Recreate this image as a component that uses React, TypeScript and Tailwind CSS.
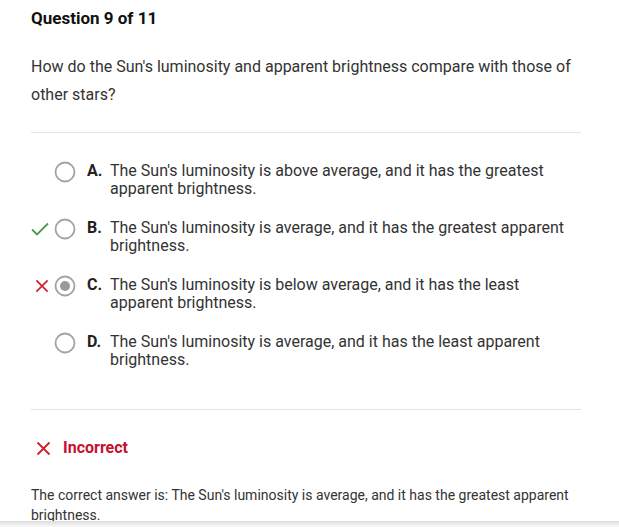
import React from "react";

const Radio = ({ selected }: { selected?: boolean }) => (
  <svg width="22" height="22" viewBox="0 0 22 22" className="shrink-0">
    <circle cx="11" cy="11" r="9.5" fill="white" stroke="#a3a3a3" strokeWidth="1.8" />
    {selected && <circle cx="11" cy="11" r="5" fill="#9a9a9a" />}
  </svg>
);

const Check = () => (
  <svg width="20" height="16" viewBox="0 0 20 16">
    <path d="M2 8.5 L7 13.5 L18 2.5" fill="none" stroke="#4a9b4a" strokeWidth="1.8" />
  </svg>
);

const Cross = ({ size = 15 }: { size?: number }) => (
  <svg width={size} height={size} viewBox="0 0 15 15">
    <path d="M1.5 1.5 L13.5 13.5 M13.5 1.5 L1.5 13.5" fill="none" stroke="#d0202a" strokeWidth="1.8" />
  </svg>
);

const options = [
  { letter: "A.", l1: "The Sun's luminosity is above average, and it has the greatest", l2: "apparent brightness.", mark: null as null | "check" | "cross", selected: false },
  { letter: "B.", l1: "The Sun's luminosity is average, and it has the greatest apparent", l2: "brightness.", mark: "check" as const, selected: false },
  { letter: "C.", l1: "The Sun's luminosity is below average, and it has the least", l2: "apparent brightness.", mark: "cross" as const, selected: true },
  { letter: "D.", l1: "The Sun's luminosity is average, and it has the least apparent", l2: "brightness.", mark: null, selected: false },
];

export default function App() {
  return (
    <div
      className="relative h-[527px] w-[619px] overflow-hidden bg-white text-[#333]"
      style={{ fontFamily: "Roboto, 'Liberation Sans', sans-serif" }}
    >
      <div className="pl-[31px] pr-[38px] pt-[7px]">
        <h1 className="text-[17px] font-bold leading-[22px] text-[#111]">Question 9 of 11</h1>
        <p className="mt-[24px] text-[16px] leading-[28px] text-[#333]">
          How do the Sun's luminosity and apparent brightness compare with those of other stars?
        </p>
        <div className="mt-[23px] h-px bg-[#e3e3e3]" />
        <div className="mt-[29px] flex flex-col gap-[21px]">
          {options.map((o) => (
            <div key={o.letter} className="flex items-start">
              <div className="flex h-[20px] w-[22px] items-center justify-start">
                {o.mark === "check" && <div className="-ml-[1px]"><Check /></div>}
                {o.mark === "cross" && <div className="ml-[4px]"><Cross size={14} /></div>}
              </div>
              <div className="ml-[1px] -mt-[1px]">
                <Radio selected={o.selected} />
              </div>
              <div className="ml-[11px] w-[23px] text-[16px] font-bold leading-[18px] text-[#222]">{o.letter}</div>
              <div className="text-[16px] leading-[18px] text-[#333]">
                <div>{o.l1}</div>
                <div>{o.l2}</div>
              </div>
            </div>
          ))}
        </div>
        <div className="mt-[40px] h-px bg-[#e3e3e3]" />
        <div className="mt-[29px] flex items-center">
          <div className="ml-[5px]"><Cross size={15} /></div>
          <span className="ml-[12px] text-[16px] font-bold leading-[18px] text-[#c8102e]">Incorrect</span>
        </div>
        <p className="mt-[28px] text-[14px] leading-[20px] text-[#333]">
          The correct answer is: The Sun's luminosity is average, and it has the greatest apparent brightness.
        </p>
      </div>
      <div className="absolute bottom-0 left-0 right-0 h-[6px] bg-gradient-to-b from-[#dcdcdc] to-[#fafafa]" />
    </div>
  );
}
